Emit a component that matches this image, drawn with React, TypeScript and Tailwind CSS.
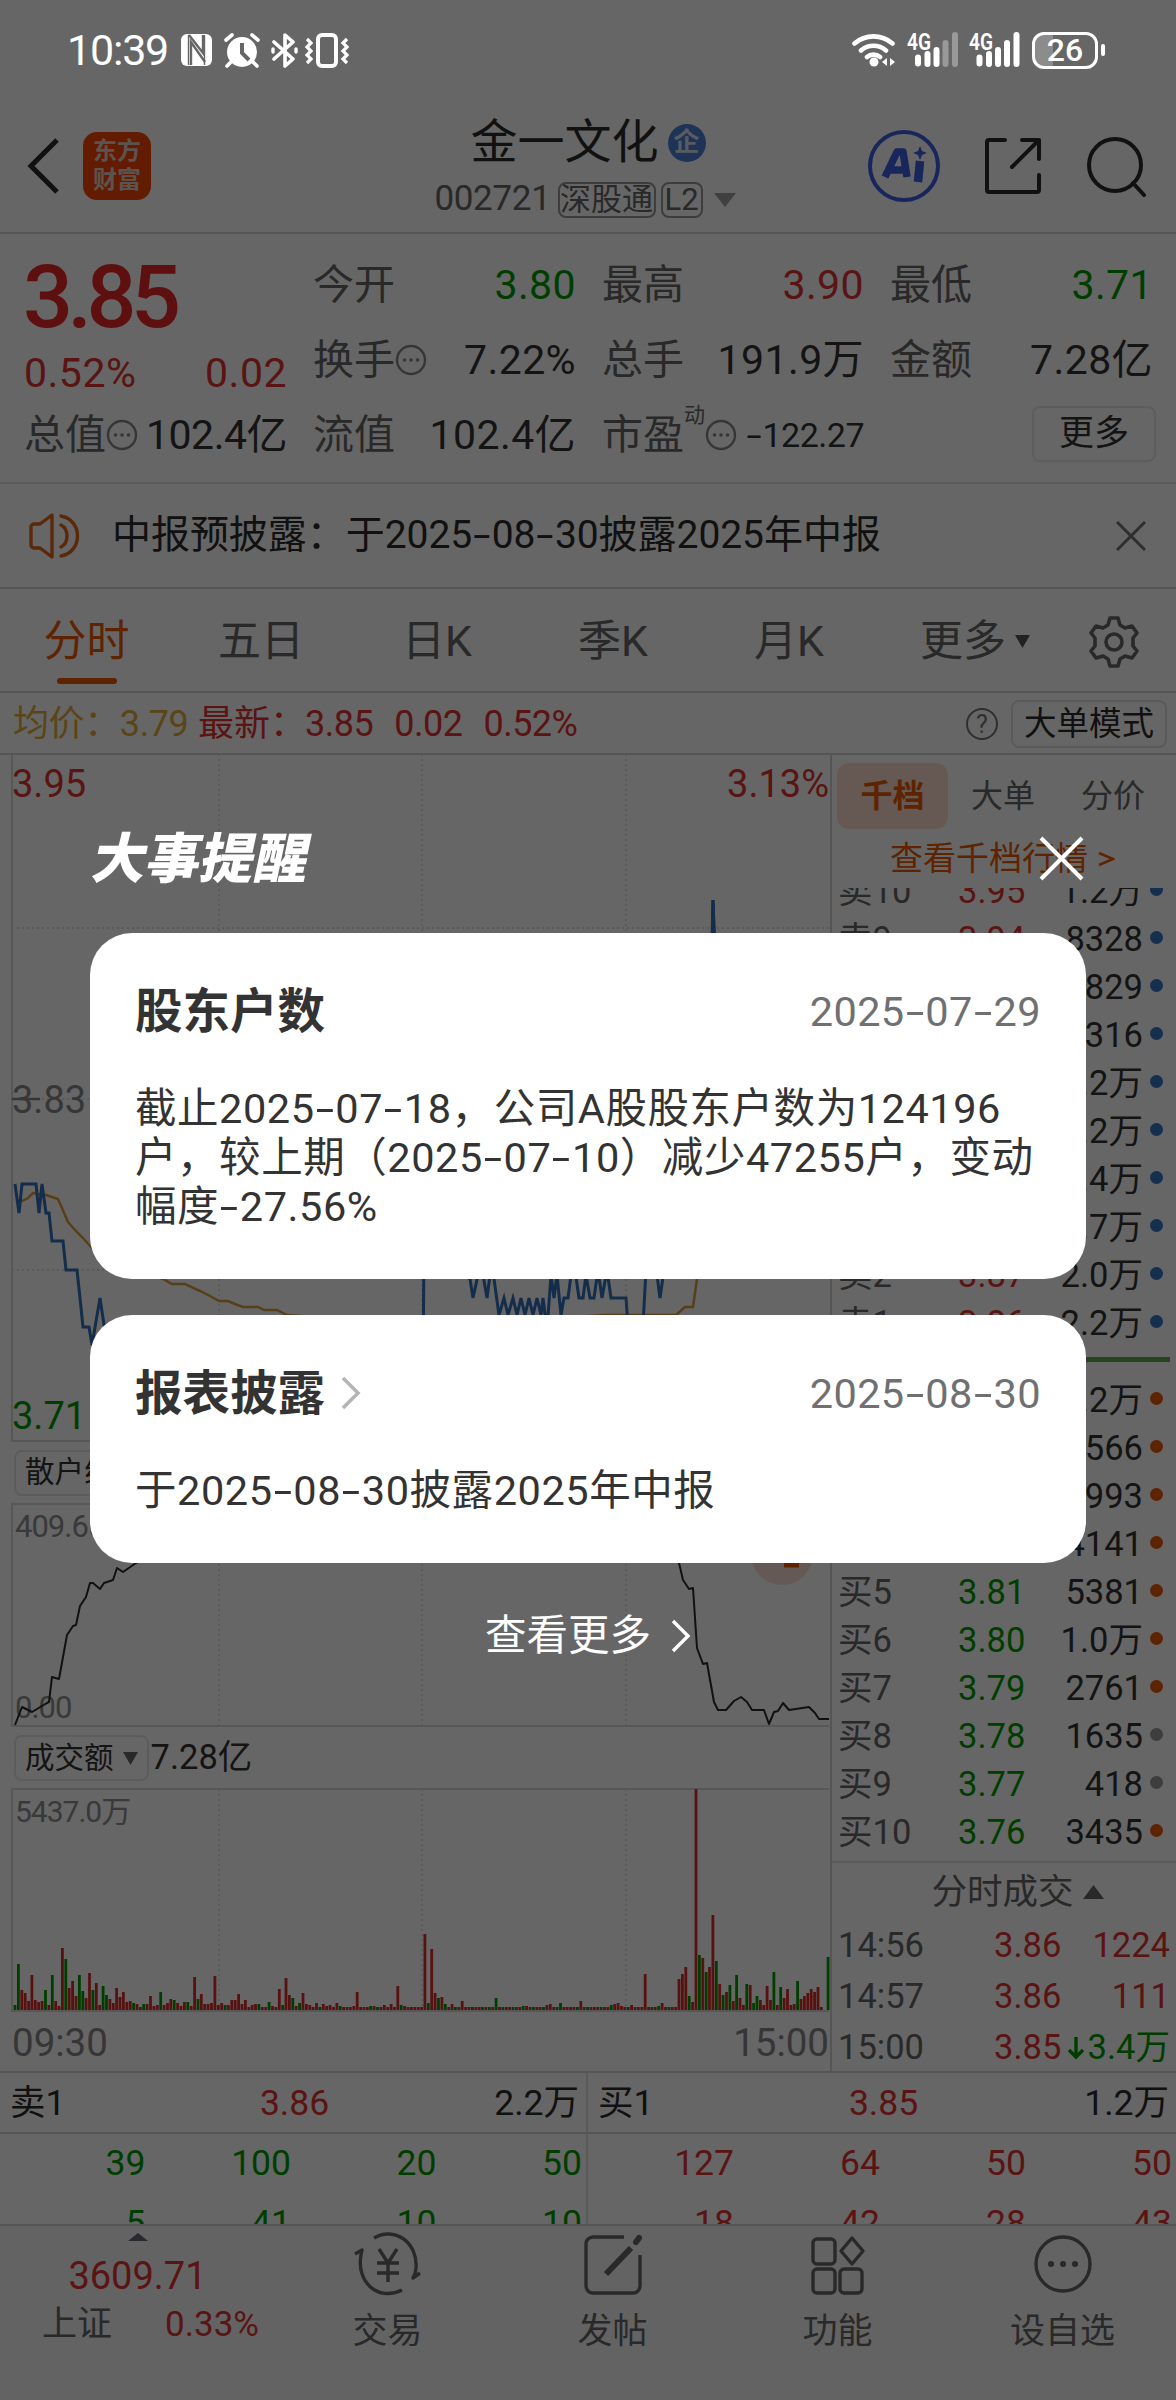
import { Fragment, type ReactNode } from 'react';
import clsx from 'clsx';

const RED = 'text-[#e23232]';
const GREEN = 'text-[#009c00]';

// Turnover per minute: positive = up (red), negative = down (green)
const VOLUMES = [
  -5, -46, 20, 17, 9, 35, 10, 8, 9, -20, 5, -35, 9, 4, 62, -51, 22, 29, 14, -35, -19, 12, 37, -20, 27, 5, -24, -15, 11, 7,
  22, 13, 18, 8, 9, -7, 6, 3, -6, 6, 14, 4, 5, -18, 5, 7, 11, -10, 7, 4, 8, -8, 4, 33, -11, 16, 6, 6, 7, 34,
  5, 7, -5, 5, 10, 10, 16, 6, 10, 3, 5, 6, -6, 3, 3, -8, 4, 3, 21, -5, 32, 15, -12, 4, -7, 17, 6, 5, 3, 7,
  -3, 6, 4, 5, 3, 7, -4, 3, 3, 3, 4, 18, 3, 3, 3, -4, 4, -3, 3, 5, 3, 6, 3, 24, -5, 4, 3, 3, 3, 3,
  3, 76, -7, 61, 17, -12, 13, -6, 3, 6, -3, 3, 9, 3, 3, -3, 3, 3, -3, 3, -3, 3, -12, 3, -3, 3, 3, -3, 3, 3,
  -4, 4, 3, -3, 3, 3, -3, 5, 6, 3, -3, -7, 3, 3, 3, 3, -3, 9, 3, -3, 3, 3, 3, -3, 3, 3, -5, 6, 7, 4,
  3, -3, 5, 3, 3, 3, 36, 3, -3, 3, -4, 7, 3, -3, 3, 3, 31, 36, 43, -14, 8, 221, -55, 52, -38, 43, 95, -49, 26, -15,
  18, -25, 9, -35, 12, 5, -26, 25, -7, -14, 10, 5, 24, 10, -38, 5, -23, 12, 21, 5, 6, -29, 11, 14, 17, 21, 18, 23, 3, 0, -53,
];

const STEP = 3.388;

const volumePath = (up: boolean) =>
  VOLUMES.map((v, i) => (v !== 0 && v > 0 === up ? `M${(15 + i * STEP).toFixed(1)} 222v-${Math.abs(v)}` : '')).join('');

const SELL = [
  ['卖10', '3.95', '1.2万'],
  ['卖9', '3.94', '8328'],
  ['卖8', '3.93', '4829'],
  ['卖7', '3.92', '5316'],
  ['卖6', '3.91', '1.2万'],
  ['卖5', '3.90', '3.2万'],
  ['卖4', '3.89', '1.4万'],
  ['卖3', '3.88', '1.7万'],
  ['卖2', '3.87', '2.0万'],
  ['卖1', '3.86', '2.2万'],
];

const BUY = [
  ['买1', '3.85', '1.2万'],
  ['买2', '3.84', '4566'],
  ['买3', '3.83', '3993'],
  ['买4', '3.82', '4141'],
  ['买5', '3.81', '5381'],
  ['买6', '3.80', '1.0万'],
  ['买7', '3.79', '2761'],
  ['买8', '3.78', '1635'],
  ['买9', '3.77', '418'],
  ['买10', '3.76', '3435'],
];

// The dash is drawn wider than Roboto's own hyphen
function T({ children }: { children: string }) {
  const parts = children.split('-');
  return (
    <>
      {parts.map((p, i) => (
        <Fragment key={i}>
          {i > 0 && <span className="inline-block w-[0.5em] scale-x-[1.6] text-center">-</span>}
          {p}
        </Fragment>
      ))}
    </>
  );
}

function MoreDots() {
  return (
    <svg viewBox="0 0 32 32" className="h-8 w-8 shrink-0 text-[#888]" fill="none" stroke="currentColor" strokeWidth="2.400">
      <circle cx="16" cy="16" r="14" />
      <path d="M9.500 16h.1M16 16h.1M22.500 16h.1" strokeWidth="3.6" strokeLinecap="round" />
    </svg>
  );
}

function Stat({ label, value, color, dots }: { label: string; value: string; color?: string; dots?: boolean }) {
  return (
    <div className="flex items-center justify-between">
      <span className="flex items-center text-[#666]">
        {label}
        {dots && <MoreDots />}
      </span>
      <span className={clsx('tracking-[0.4px]', color)}>{value}</span>
    </div>
  );
}

function StatusBar() {
  return (
    <div className="flex h-[100px] items-center justify-between pl-[67px] pr-[71px] text-white">
      <div className="flex items-center">
        <span className="w-[113px] text-[43px] leading-[44px] tracking-[-1.2px]">10:39</span>
        <svg width="170" height="36" viewBox="0 0 170 36" fill="none" stroke="#fff">
          <rect x="1" y="2" width="31" height="32" rx="6" fill="#fff" stroke="none" />
          <path d="M8.500 3v30M24.500 3v30" stroke="#666" strokeWidth="1.400" />
          <path d="M11 33V10l14 20M9 3l14 18V3" stroke="#666" strokeWidth="2.400" />
          <circle cx="62" cy="20" r="15" fill="#fff" stroke="none" />
          <path d="M46 8l6-5M78 8l-6-5M51 30l-4 4M73 30l4 4" strokeWidth="3.6" strokeLinecap="round" />
          <path d="M62 11v10l7 7" stroke="#666" strokeWidth="4" />
          <path d="M94 10l19 17-8 7V3l8 7-19 17" strokeWidth="3.6" strokeLinejoin="round" strokeLinecap="round" />
          <path d="M93 17v3M116 17v3" strokeWidth="3.4" strokeLinecap="round" />
          <rect x="138" y="3" width="18" height="31" rx="4" strokeWidth="4" />
          <path d="M127 7l4 4-4 4 4 4-4 4 4 4-4 4M167 7l-4 4 4 4-4 4 4 4-4 4 4 4" strokeWidth="3.2" />
        </svg>
      </div>
      <div className="flex items-center">
        <svg width="178" height="40" viewBox="0 0 178 40" fill="none" stroke="#fff" strokeWidth="4.6" strokeLinecap="round">
          <path d="M2.500 13.500a29 29 0 0 1 38 0M9 20.500a19 19 0 0 1 25 0M15 27a10 10 0 0 1 13 0" />
          <circle cx="22" cy="32" r="4.500" fill="#fff" stroke="none" />
          <path d="M35 28v8l-5-4zM38 36v-8l5 4z" fill="#fff" stroke="none" />
          <g fill="#fff" stroke="none" fontSize="23" fontWeight="600">
            <text x="55" y="20" textLength="24" lengthAdjust="spacingAndGlyphs">
              4G
            </text>
            <text x="117" y="20" textLength="24" lengthAdjust="spacingAndGlyphs">
              4G
            </text>
          </g>
          <path d="M66 27.500v6M75.500 24v10M84.500 20v14M127.500 27.500v6M137 24v10M146 20v14M155 13v21M164.500 5v29" strokeWidth="6" />
          <path d="M93.500 13v21M103 5v29" strokeWidth="6" stroke="#999" />
        </svg>
        <div className="ml-[2px] flex h-[37px] w-[66px] items-center justify-center rounded-[12px] border-[3px] border-white bg-linear-to-r from-[#8c8c8c] from-30% to-transparent to-30% text-[32px] leading-none font-medium">
          26
        </div>
        <div className="ml-[3px] h-3 w-1 rounded-full bg-white" />
      </div>
    </div>
  );
}

function Header() {
  return (
    <div className="flex h-[134px] items-center border-b-2 border-[#d4d4d4]">
      <div className="flex w-[423px] items-center pl-6">
        <svg width="40" height="60" viewBox="0 0 40 60" fill="none" stroke="#2b2b2b" strokeWidth="5">
          <path d="M33 4L7 30l26 26" />
        </svg>
        <div className="ml-[19px] flex h-[68px] w-[68px] flex-col items-center justify-center rounded-[14px] bg-[#f84600] text-[24px] leading-[29px] font-bold text-[#e5cfc6]">
          <span>东方</span>
          <span>财富</span>
        </div>
      </div>
      <div className="flex w-[330px] flex-col items-center pt-[7px]">
        <div className="flex h-[60px] items-center text-[47px] text-[#2b2b2b]">
          金一文化
          <span className="ml-[9px] flex h-[38px] w-[38px] items-center justify-center rounded-full bg-[#4f7fd6] text-[26px] font-bold text-[#dde4f5]">企</span>
        </div>
        <div className="-ml-[6px] flex h-[54px] items-center text-[#666]">
          <span className="text-[35px] tracking-[-0.3px]">002721</span>
          <span className="ml-[7px] flex h-9 w-[98px] items-center justify-center rounded-lg border-2 border-[#999] text-[31px] leading-none whitespace-nowrap">深股通</span>
          <span className="ml-[5px] flex h-9 w-[42px] items-center justify-center rounded-lg border-2 border-[#999] text-[31px] leading-none">L2</span>
          <svg width="22" height="14" viewBox="0 0 22 14" className="ml-[11px] fill-[#a0a0a0]">
            <path d="M0 0h22L11 14z" />
          </svg>
        </div>
      </div>
      <div className="ml-[114px] flex items-center">
        <svg width="74" height="74" viewBox="0 0 74 74" fill="none">
          <circle cx="37" cy="37" r="34" stroke="#3c5fe6" strokeWidth="4" />
          <path d="M18 48l12-25h6l4 25M24 41h13" stroke="#3c5fe6" strokeWidth="7.500" strokeLinejoin="round" />
          <path d="M53 32l-2 21" stroke="#3c5fe6" strokeWidth="8.500" />
          <path d="M53 17l2 5 5 2-5 2-2 5-2-5-5-2 5-2z" fill="#3c5fe6" />
        </svg>
        <svg width="58" height="58" viewBox="0 0 58 58" className="ml-[43px]" fill="none" stroke="#2b2b2b" strokeWidth="4" strokeLinecap="round" strokeLinejoin="round">
          <path d="M21 3H5a2 2 0 0 0-2 2v48a2 2 0 0 0 2 2h48a2 2 0 0 0 2-2V38M38 3h17v19M55 3L28 30" />
        </svg>
        <svg width="62" height="62" viewBox="0 0 62 62" className="ml-[44px]" fill="none" stroke="#2b2b2b" strokeWidth="4" strokeLinecap="round">
          <circle cx="29" cy="30" r="26" />
          <path d="M47 48l11 12" />
        </svg>
      </div>
    </div>
  );
}

function Quote() {
  return (
    <div className="flex h-[250px] border-b-2 border-[#e4e4e4] pl-[24px] text-[41px] leading-[50px] text-[#333]">
      <div className="w-[263px] pt-4">
        <div className="-ml-px flex h-[94px] items-center text-[88px] font-medium tracking-[-5.500px] text-[#ea2a2a]">3.85</div>
        <div className={clsx('mt-[4px] flex h-[50px] items-center justify-between tracking-[0.5px]', RED)}>
          <span>0.52%</span>
          <span>0.02</span>
        </div>
        <div className="mt-[12px] flex h-[50px] items-center justify-between">
          <span className="flex items-center text-[#666]">
            总值
            <MoreDots />
          </span>
          <span className="-ml-1 tracking-[-0.5px]">102.4亿</span>
        </div>
      </div>
      <div className="ml-[26px] grid w-[841px] grid-cols-[263px_262px_263px] grid-rows-[50px_50px_50px] gap-x-[26px] gap-y-[25px] pt-[26px]">
        <Stat label="今开" value="3.80" color={GREEN} />
        <Stat label="最高" value="3.90" color={RED} />
        <Stat label="最低" value="3.71" color={GREEN} />
        <Stat label="换手" value="7.22%" dots />
        <Stat label="总手" value="191.9万" />
        <Stat label="金额" value="7.28亿" />
        <Stat label="流值" value="102.4亿" />
        <div className="flex items-center justify-between">
          <span className="flex items-center text-[#666]">
            市盈
            <span className="-mt-10 text-[21px]">动</span>
            <MoreDots />
          </span>
          <span className="text-[34px] tracking-[-0.5px]">
            <T>-122.27</T>
          </span>
        </div>
        <div className="-mt-[4px] -mr-[3px] flex h-[56px] w-[124px] items-center justify-center justify-self-end rounded-lg border-2 border-[#e8e8e8] text-[35px]">更多</div>
      </div>
    </div>
  );
}

function Notice() {
  return (
    <div className="flex h-[105px] items-center border-b-2 border-[#d4d4d4] pr-[30px] pl-[29px]">
      <svg width="52" height="46" viewBox="0 0 52 46" fill="none" stroke="#e0651a" strokeWidth="3.4" strokeLinejoin="round" strokeLinecap="round">
        <path d="M2 14a3 3 0 0 1 3-3h6L23 2v42L11 35H5a3 3 0 0 1-3-3z" />
        <path d="M32 12c8 4 8 18 0 22M32 3c22 4 22 36 0 40" />
      </svg>
      <span className="ml-[31px] text-[39px] tracking-[-0.05px] text-[#2b2b2b]">
        <T>中报预披露：于2025-08-30披露2025年中报</T>
      </span>
      <svg width="30" height="30" viewBox="0 0 30 30" className="ml-auto" stroke="#777" strokeWidth="3">
        <path d="M1 1l28 28M29 1L1 29" />
      </svg>
    </div>
  );
}

function Tabs() {
  return (
    <div className="flex h-[104px] items-center border-b-2 border-[#d4d4d4] pt-[3px] text-[43px] text-[#666]">
      <div className="relative flex h-full w-[173px] items-center justify-center text-[#ea5a04]">
        分时
        <span className="absolute bottom-[7px] h-[6px] w-[60px] rounded-full bg-[#ea5a04]" />
      </div>
      {['五日', '日K', '季K', '月K'].map((t) => (
        <div key={t} className="w-[176px] text-center">
          {t}
        </div>
      ))}
      <div className="ml-[43px] flex items-center">
        更多
        <svg width="15" height="13" viewBox="0 0 15 13" className="ml-[9px] fill-[#555]">
          <path d="M0 0h15L7.500 13z" />
        </svg>
      </div>
      <svg width="54" height="54" viewBox="0 0 54 54" className="ml-[57px]" fill="none" stroke="#666" strokeWidth="3.6" strokeLinejoin="round">
        <path d="M23 3h8l2 7 5 3 7-2 5 7-4 5v8l4 5-5 7-7-2-5 3-2 7h-8l-2-7-5-3-7 2-5-7 4-5v-8l-4-5 5-7 7 2 5-3z" />
        <circle cx="27" cy="27" r="8" />
      </svg>
    </div>
  );
}

function PriceInfo() {
  return (
    <div className={clsx('flex h-[62px] items-center border-b-2 border-[#d4d4d4] pt-[2px] pr-[9px] pl-[13px] text-[36px] whitespace-nowrap', RED)}>
      <span className="w-[185px] tracking-[-0.4px] text-[#e0ac40]">均价：3.79</span>
      <span className="w-[109px]">最新：</span>
      <span className="ml-[-2px] flex gap-[21px] tracking-[-0.5px]">
        <span>3.85</span>
        <span>0.02</span>
        <span>0.52%</span>
      </span>
      <span className="ml-auto flex h-8 w-8 items-center justify-center rounded-full border-[2.5px] border-[#777] text-[25px] leading-none text-[#777]">?</span>
      <span className="ml-[13px] flex h-[48px] w-[156px] items-center justify-center rounded-lg border-2 border-[#e2e2e2] text-[32.5px] text-[#2b2b2b]">大单模式</span>
    </div>
  );
}

function Grid({ top, bottom }: { top: number; bottom: number }) {
  return (
    <g fill="none" stroke="#dadada" strokeWidth="2">
      <path d={`M829 ${top}H12V${bottom}H829`} />
      <path d={`M219 ${top}V${bottom}M422 ${top}V${bottom}M626 ${top}V${bottom}`} strokeDasharray="2 3" strokeWidth="1.500" />
    </g>
  );
}

function SubLabel({ children, value }: { children: ReactNode; value?: string }) {
  return (
    <div className="flex h-full items-center pl-[14px] text-[#333]">
      <span className="flex h-[46px] items-center gap-[9px] rounded-lg border-2 border-[#e6e6e6] px-[9px] text-[29.500px] whitespace-nowrap">
        {children}
        <svg width="15" height="13" viewBox="0 0 15 13" className="fill-[#666]">
          <path d="M0 0h15L7.500 13z" />
        </svg>
      </span>
      <span className="ml-[2px] text-[34.500px]">{value}</span>
    </div>
  );
}

function Charts() {
  return (
    <div className="w-[830px]">
      <svg width="830" height="688" viewBox="0 755 830 688" className="block">
        <Grid top={754} bottom={1441} />
        <path d="M12 928H829M12 1099H829M12 1270H829" stroke="#d6d6d6" strokeWidth="1.500" strokeDasharray="2 3" />
        <path
          d="M20 1202L28 1198 33 1193 46 1195 58 1199 62 1208 68 1222 75 1230 82 1237 92 1248 120 1262 150 1274 163 1279 172 1284H185L200 1291 210 1296 219 1301H228L235 1304 243 1307H258L264 1310H277L287 1315 420 1325 560 1318 605 1315H676L685 1307H693L697 1279 702 1240 720 1120 829 1110"
          fill="none"
          stroke="#d99f40"
          strokeWidth="2.500"
        />
        <path
          d="M15 1184L19 1213 22 1184H36L39 1213 42 1184 46 1213H49L52 1241H63L66 1270H77L80 1298 83 1327H89L92 1345 100 1298 104 1325 120 1360 423 1370 424 1250 470 1279 473 1298 478 1275 483 1275 487 1298 490 1275 494 1279 499 1315 504 1298 508 1315 513 1298 517 1315 521 1298 525 1315 529 1298 533 1315 537 1298 541 1315 543 1298 547 1330 551 1275 554 1298 557 1275 561 1315 564 1298H568L571 1275 575 1270 579 1298H583L586 1275 590 1298H594L598 1270 602 1298 607 1270 611 1298H626L628 1325H643L646 1270 655 1260 660 1298 664 1270 690 1250 700 1100 712 1000 713 900 716 1000 829 1030"
          fill="none"
          stroke="#3070b8"
          strokeWidth="3"
        />
        <path d="M712 940l1-40 1.500 40" fill="none" stroke="#3070b8" strokeWidth="3" />
        <path d="M12 1099h28" stroke="#888" strokeWidth="2.500" />
        <g fontSize="38">
          <text x="12" y="797" fill="#e23232">
            3.95
          </text>
          <text x="829" y="797" fill="#e23232" textAnchor="end">
            3.13%
          </text>
          <text x="12" y="1113" fill="#888">
            3.83
          </text>
          <text x="12" y="1429" fill="#009c00">
            3.71
          </text>
        </g>
      </svg>
      <div className="h-[59px]">
        <SubLabel>散户线</SubLabel>
      </div>
      <svg width="830" height="226" viewBox="0 1502 830 226" className="block">
        <Grid top={1504} bottom={1726} />
        <g fontSize="31" fill="#8f8f8f" className="tracking-[-1px]">
          <text x="15" y="1537">
            409.65
          </text>
          <text x="15" y="1718">
            0.00
          </text>
        </g>
        <path
          d="M15 1725L22 1707 32 1712 47 1703 49 1702 52 1677 59 1679 67 1635 73 1626 76 1625 80 1606 86 1597 90 1583H93L100 1589 104 1583 113 1580 117 1568 123 1572 136 1563 200 1530 660 1530 679 1563 683 1580 689 1589 693 1588 697 1648 703 1664 707 1663 714 1702 718 1710H726L734 1701 741 1697 747 1702 752 1710 764 1710 769 1724 774 1712 778 1711 783 1703 789 1710 809 1707 815 1713 819 1719H829"
          fill="none"
          stroke="#2b2b2b"
          strokeWidth="2"
          strokeLinejoin="round"
        />
        <circle cx="782" cy="1554" r="31" fill="#fbdfd4" />
        <path d="M784 1565h15" stroke="#ea5a04" strokeWidth="5" />
      </svg>
      <div className="h-[60px]">
        <SubLabel value="7.28亿">成交额</SubLabel>
      </div>
      <svg width="830" height="284" viewBox="0 0 830 284" className="block">
        <Grid top={1} bottom={223} />
        <text x="15" y="34" fontSize="30" fill="#8f8f8f" className="tracking-[-1px]">
          5437.0万
        </text>
        <path d={volumePath(true)} stroke="#dc2c2c" strokeWidth="2.800" />
        <path d={volumePath(false)} stroke="#009c00" strokeWidth="2.800" />
        <g fontSize="38.500" fill="#888">
          <text x="12" y="268">
            09:30
          </text>
          <text x="829" y="268" textAnchor="end">
            15:00
          </text>
        </g>
      </svg>
    </div>
  );
}

function BookRow({ row, color, dot }: { row: string[]; color: string; dot: string }) {
  return (
    <div className="flex h-12 shrink-0 items-center">
      <span className="w-[120px] pt-[3px] text-[#666]">{row[0]}</span>
      <span className={clsx('w-[70px] pt-[3px]', color)}>{row[1]}</span>
      <span className="ml-auto pt-[3px] text-[#333]">{row[2]}</span>
      <span className={clsx('ml-[7px] h-[13px] w-[13px] rounded-full', dot)} />
    </div>
  );
}

function OrderBook() {
  return (
    <div className="flex w-[346px] flex-col border-l-2 border-[#d4d4d4] text-[34.500px] leading-[48px] *:shrink-0">
      <div className="flex h-[75px] items-center pt-[6px] pl-[5px] text-[32px] text-[#666]">
        <span className="mr-[23px] flex h-[66px] w-[111px] items-center justify-center rounded-xl bg-[#ffdccf] font-bold text-[#ea5a04]">千档</span>
        <span>大单</span>
        <span className="ml-[46px]">分价</span>
      </div>
      <div className="flex h-[58px] items-center gap-[10px] pl-[58px] text-[33px] text-[#ea5a04]">
        查看千档行情
        <svg width="17" height="16" viewBox="0 0 17 16" fill="none" stroke="currentColor" strokeWidth="2.600">
          <path d="M1 2l14 6-14 6" />
        </svg>
      </div>
      <div className="flex h-[457px] flex-col justify-end overflow-hidden pr-[13px] pl-[6px]">
        {SELL.map((r) => (
          <BookRow key={r[0]} row={r} color={RED} dot="bg-[#3576c8]" />
        ))}
      </div>
      <div className="mt-[12px] mr-[6px] mb-[12px] ml-[6px] h-[5px] bg-[#5cb040]" />
      <div className="pr-[13px] pl-[6px]">
        {BUY.map((r) => (
          <BookRow key={r[0]} row={r} color={GREEN} dot={r[0] === '买8' || r[0] === '买9' ? 'bg-[#999]' : 'bg-[#ea5a04]'} />
        ))}
      </div>
      <div className="mt-[7px] flex h-[59px] items-center justify-center gap-[9px] border-t-2 border-[#e2e2e2] pl-[27px] text-[35.500px] text-[#666]">
        分时成交
        <svg width="21" height="14" viewBox="0 0 21 14" className="fill-[#666]">
          <path d="M0 14h21L10.500 0z" />
        </svg>
      </div>
      <div className={clsx('grid grid-cols-[156px_72px_1fr] pr-[6px] pl-[6px] leading-[51px]', RED)}>
        <span className="text-[#666]">14:56</span>
        <span>3.86</span>
        <span className="text-right">1224</span>
        <span className="text-[#666]">14:57</span>
        <span>3.86</span>
        <span className="text-right">111</span>
        <span className="text-[#666]">15:00</span>
        <span>3.85</span>
        <span className={clsx('flex items-center justify-end gap-1', GREEN)}>
          <svg width="16" height="24" viewBox="0 0 16 24" fill="none" stroke="currentColor" strokeWidth="3.400">
            <path d="M8 1v20M1 14l7 7 7-7" />
          </svg>
          3.4万
        </span>
      </div>
    </div>
  );
}

function QueueSide({ head, rows, color }: { head: string[]; rows: string[][]; color: string }) {
  return (
    <div className="w-[588px]">
      <div className="grid h-[61px] grid-cols-3 items-center border-b-2 border-[#d4d4d4] pt-[2px] pr-[7px] pl-[10px] text-[#2b2b2b]">
        <span>{head[0]}</span>
        <span className={clsx('text-center', RED)}>{head[1]}</span>
        <span className="text-right">{head[2]}</span>
      </div>
      {rows.map((r, i) => (
        <div key={i} className={clsx('grid h-[60px] grid-cols-4 items-center pr-[4px] text-right', color)}>
          {r.map((v, j) => (
            <span key={j}>{v}</span>
          ))}
        </div>
      ))}
    </div>
  );
}

function Queue() {
  return (
    <div className="flex h-[153px] overflow-hidden border-t-2 border-[#d4d4d4] text-[35.500px] leading-none">
      <QueueSide
        head={['卖1', '3.86', '2.2万']}
        rows={[
          ['39', '100', '20', '50'],
          ['5', '41', '10', '10'],
        ]}
        color={GREEN}
      />
      <div className="border-l-2 border-[#e2e2e2]">
        <QueueSide
          head={['买1', '3.85', '1.2万']}
          rows={[
            ['127', '64', '50', '50'],
            ['18', '42', '28', '43'],
          ]}
          color={RED}
        />
      </div>
    </div>
  );
}

function NavItem({ label, children }: { label: string; children: ReactNode }) {
  return (
    <div className="flex w-[225px] flex-col items-center pt-[4px] text-[#666]">
      <svg width="68" height="68" viewBox="0 0 68 68" fill="none" stroke="currentColor" strokeWidth="3.400" strokeLinejoin="round">
        {children}
      </svg>
      <span className="mt-[8px] text-[35px] leading-[52px]">{label}</span>
    </div>
  );
}

function BottomNav() {
  return (
    <div className="flex h-[176px] border-t-2 border-[#d4d4d4] bg-[#f8f8f8]">
      <div className={clsx('flex w-[275px] flex-col items-center pt-[7px]', RED)}>
        <svg width="20" height="8" viewBox="0 0 20 8" className="fill-[#667]">
          <path d="M0 8h20L10 0z" />
        </svg>
        <span className="mt-[11px] text-[38px] leading-[48px]">3609.71</span>
        <div className="mt-px flex items-center gap-[53px] pl-[26px] text-[35px] leading-[48px]">
          <span className="text-[#666]">上证</span>
          <span>0.33%</span>
        </div>
      </div>
      <NavItem label="交易">
        <path d="M20 8C40-4 64 12 62 38q-1 7-3 10l7-5M48 60C24 72 2 52 7 25l1-5-7 4" />
        <path d="M25 19l9 14 9-14M34 33v19M23 33h22M23 43h22" />
      </NavItem>
      <NavItem label="发帖">
        <path d="M45 7H14a7 7 0 0 0-7 7v42a7 7 0 0 0 7 7h40a7 7 0 0 0 7-7V25" />
        <path d="M52 18L27 44" strokeWidth="6" />
        <path d="M57 12l3-4" strokeWidth="6" strokeLinecap="round" />
      </NavItem>
      <NavItem label="功能">
        <rect x="9" y="9" width="22" height="25" rx="4" />
        <rect x="9" y="39" width="22" height="24" rx="4" />
        <rect x="36" y="39" width="22" height="24" rx="4" />
        <path d="M48 8l11 13-11 13-11-13z" />
      </NavItem>
      <NavItem label="设自选">
        <circle cx="34" cy="34" r="27" />
        <path d="M22 34h.1M34 34h.1M46 34h.1" strokeWidth="6" strokeLinecap="round" />
      </NavItem>
    </div>
  );
}

function EventCard({ title, date, lines, arrow }: { title: string; date: string; lines: string[]; arrow?: boolean }) {
  return (
    <div className="rounded-[42px] bg-white px-[45px] pt-[50px] pb-[48px] text-[#333]">
      <div className="flex h-[60px] items-center">
        <span className="text-[47.500px] font-bold">{title}</span>
        {arrow && (
          <svg width="20" height="34" viewBox="0 0 20 34" className="mb-1 ml-[16px]" fill="none" stroke="#b5b5b5" strokeWidth="3.600">
            <path d="M2 2l15 15L2 32" />
          </svg>
        )}
        <span className="ml-auto pb-[2px] text-[41.500px] tracking-[0.4px] text-[#707070]">
          <T>{date}</T>
        </span>
      </div>
      <div className="mt-[41px] text-[41.500px] leading-[49px] tracking-[0.55px] whitespace-nowrap">
        {lines.map((l) => (
          <div key={l}>
            <T>{l}</T>
          </div>
        ))}
      </div>
    </div>
  );
}

function EventModal() {
  return (
    <div className="absolute inset-0 bg-black/60">
      <StatusBar />
      <div className="mt-[725px] flex h-[66px] items-center justify-between pr-[92px] pl-[94px]">
        <span className="-skew-x-12 pt-[3px] text-[54px] leading-none font-black text-white">大事提醒</span>
        <svg width="45" height="45" viewBox="0 0 45 45" stroke="#fff" strokeWidth="4">
          <path d="M2 2l41 41M43 2L2 43" />
        </svg>
      </div>
      <div className="mt-[42px] flex flex-col gap-9 pr-[90px] pl-[90px]">
        <EventCard
          title="股东户数"
          date="2025-07-29"
          lines={['截止2025-07-18，公司A股股东户数为124196', '户，较上期（2025-07-10）减少47255户，变动', '幅度-27.56%']}
        />
        <EventCard title="报表披露" date="2025-08-30" lines={['于2025-08-30披露2025年中报']} arrow />
      </div>
      <div className="mt-[49px] flex h-12 items-center justify-center gap-[20px] text-[41.500px] text-white">
        查看更多
        <svg width="20" height="34" viewBox="0 0 20 34" fill="none" stroke="#fff" strokeWidth="3.400">
          <path d="M2 2l15 15L2 32" />
        </svg>
      </div>
    </div>
  );
}

export default function App() {
  return (
    <div className="relative h-[2400px] w-[1176px] overflow-hidden bg-white font-[Roboto,'Noto_Sans_CJK_SC',sans-serif]">
      <div className="pt-[100px]">
        <Header />
        <Quote />
        <Notice />
        <Tabs />
        <PriceInfo />
        <div className="flex h-[1316px] overflow-hidden">
          <Charts />
          <OrderBook />
        </div>
        <Queue />
        <BottomNav />
      </div>
      <EventModal />
    </div>
  );
}
